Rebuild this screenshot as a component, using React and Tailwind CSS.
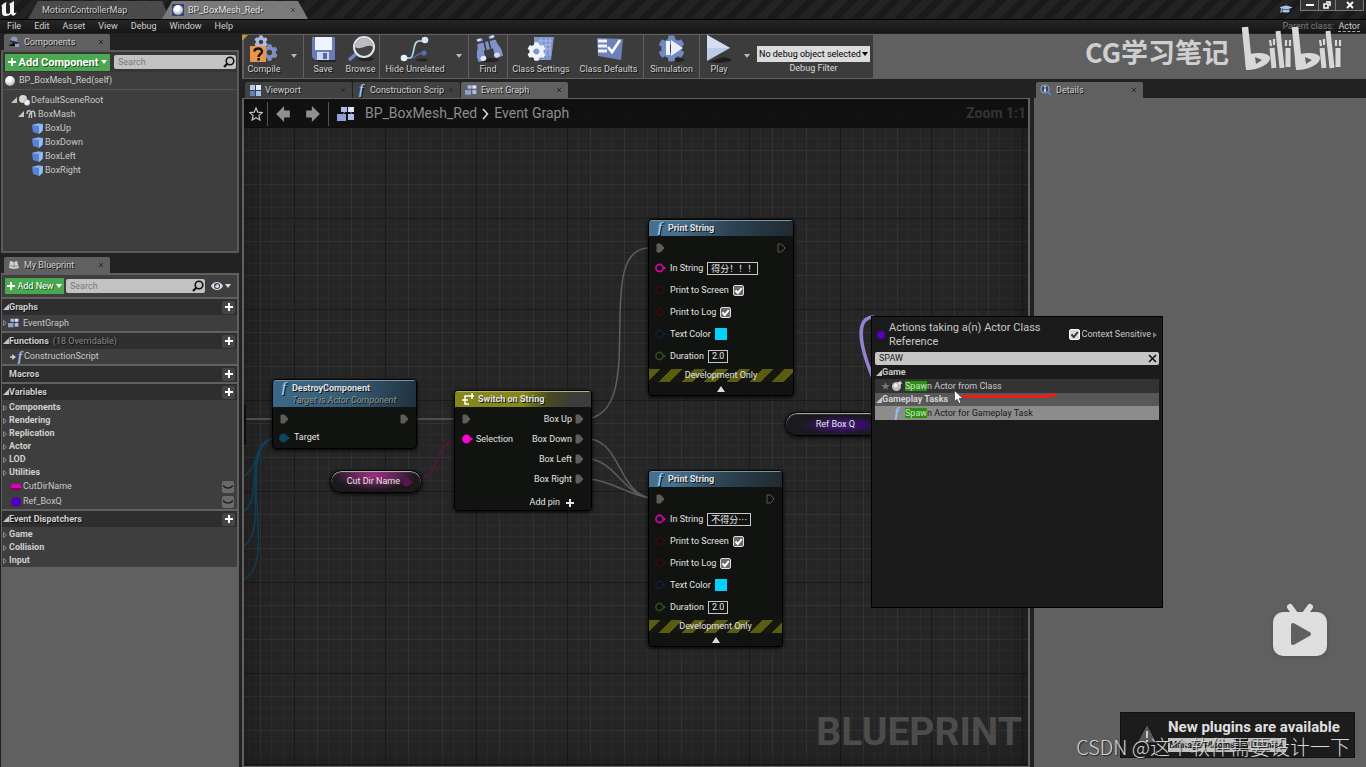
import React, { useState } from "react";
import { FaCog, FaBinoculars, FaGraduationCap, FaEye } from "react-icons/fa";

const categories = ["Components", "Rendering", "Replication", "Actor", "LOD", "Utilities"];
const dispatchers = ["Game", "Collision", "Input"];
const meshes = ["BoxUp", "BoxDown", "BoxLeft", "BoxRight"];
const menus = ["File", "Edit", "Asset", "View", "Debug", "Window", "Help"];

/* ---------- small icons ---------- */

function Caret({ className = "" }) {
  return (
    <svg viewBox="0 0 6 4" className={`h-1 w-1.5 shrink-0 ${className}`} fill="currentColor">
      <path d="M0 0h6L3 4z" />
    </svg>
  );
}

function Plus({ className = "" }) {
  return (
    <svg viewBox="0 0 8 8" className={`h-2 w-2 shrink-0 ${className}`} fill="currentColor">
      <path d="M3 0h2v3h3v2H5v3H3V5H0V3h3z" />
    </svg>
  );
}

function OpenArrow() {
  return (
    <svg viewBox="0 0 6 6" className="h-1.5 w-1.5 shrink-0" fill="#c4c4c4">
      <path d="M6 0v6H0z" />
    </svg>
  );
}

function ClosedArrow() {
  return (
    <svg viewBox="0 0 6 8" className="h-2 w-1.5 shrink-0" fill="none" stroke="#8a8a8a">
      <path d="M1.500 1.500L4.500 4l-3 2.500z" />
    </svg>
  );
}

function CloseX({ className = "" }) {
  return (
    <svg viewBox="0 0 6 6" className={`h-1.5 w-1.5 shrink-0 ${className}`} stroke="currentColor">
      <path d="M1 1l4 4M5 1L1 5" />
    </svg>
  );
}

function Magnifier() {
  return (
    <svg viewBox="0 0 12 12" className="h-3 w-3 shrink-0" fill="none" stroke="#111">
      <circle cx="7" cy="5" r="3.800" strokeWidth="1.600" />
      <path d="M4.300 7.800L1 11" strokeWidth="2.200" />
    </svg>
  );
}

function Sphere({ className = "h-2.5 w-2.5" }) {
  return (
    <span
      className={`inline-block shrink-0 rounded-full bg-[radial-gradient(circle_at_40%_30%,#fff_25%,#c9c9c9_60%,#777)] ${className}`}
    />
  );
}

function GraphIcon({ className = "h-3 w-3" }) {
  return (
    <svg viewBox="0 0 18 14" className={`shrink-0 ${className}`}>
      <g fill="#aebbe4">
        <rect x="4" y="0" width="6" height="5" />
        <rect x="11" y="0" width="6" height="5" fill="#dfe5f8" />
        <rect x="0" y="7" width="9" height="7" fill="#8ea0d6" />
        <rect x="11" y="7" width="6" height="6" />
      </g>
      <path d="M8 5l-3 3M14 5v2" stroke="#6f7fae" />
    </svg>
  );
}

function ViewportIcon() {
  return (
    <svg viewBox="0 0 11 11" className="h-[11px] w-[11px]">
      <rect width="5" height="5" fill="#b9cbe9" />
      <rect x="6" width="5" height="5" fill="#e5edfa" />
      <rect y="6" width="5" height="5" fill="#5c83bd" />
      <rect x="6" y="6" width="5" height="5" fill="#9fc0e8" />
    </svg>
  );
}

function Func({ className = "text-[#8fc6ee]" }) {
  return (
    <span
      className={`w-2 text-center font-['Liberation_Serif',serif] text-[14px] font-bold italic leading-[14px] ${className}`}
    >
      f
    </span>
  );
}

function CubeIcon() {
  return (
    <svg viewBox="0 0 11 11" className="h-[11px] w-[11px] shrink-0">
      <path d="M0 2l6-1.500L11 1l-.5 7L7 11 1 9z" fill="#5b82d2" />
      <path d="M0 2l6-1.500L11 1 7 3z" fill="#8db4ee" />
      <path d="M7 3l4-2-.5 7L7 11z" fill="#8fc0ee" />
    </svg>
  );
}

function ExecPin({ open }) {
  return (
    <svg viewBox="0 0 9 10" className="h-2.5 w-[9px] shrink-0">
      <path
        d="M1 1h3.500L8 5 4.500 9H1z"
        fill={open ? "none" : "#5d5d5b"}
        stroke="#5d5d5b"
      />
    </svg>
  );
}

function DataPin({ color, filled }) {
  return (
    <svg viewBox="0 0 11 10" className="h-2.5 w-[11px] shrink-0">
      <circle cx="4.500" cy="5" r="3.600" fill={filled ? color : "none"} stroke={color} strokeWidth="1.600" />
      <path d="M8.500 3L11 5 8.500 7z" fill={color} />
    </svg>
  );
}

function Tick({ id, light }) {
  return (
    <span className="relative inline-flex h-[11px] w-[11px] shrink-0">
      <input
        id={id}
        type="checkbox"
        defaultChecked
        className={`peer h-[11px] w-[11px] appearance-none rounded-[2px] border ${
          light ? "border-white bg-[#d8d8d8]" : "border-[#dcdcdc] bg-[#6a6a6a]"
        }`}
      />
      <svg
        viewBox="0 0 11 11"
        className="pointer-events-none absolute inset-0 hidden peer-checked:block"
        fill="none"
        stroke={light ? "#333" : "#fff"}
        strokeWidth="2"
      >
        <path d="M2.500 5.500l2.300 2.500 4-5" />
      </svg>
    </span>
  );
}

/* ---------- toolbar ---------- */

function CompileIcon() {
  return (
    <svg viewBox="0 0 30 28" className="h-7 w-[30px]">
      <FaCog x="5" y="0" size={14} color="#aebbe0" />
      <FaCog x="12" y="9" size={17} color="#7f90bf" />
      <rect x="1" y="11" width="16" height="16" fill="#e8954f" />
      <path
        d="M5.500 16.500c0-4 7.500-4 7.500 0 0 2.500-3.500 2.500-3.500 5.500"
        fill="none"
        stroke="#1c130b"
        strokeWidth="2.400"
      />
      <rect x="8.300" y="23" width="2.600" height="2.600" fill="#1c130b" />
    </svg>
  );
}

function SaveIcon() {
  return (
    <svg viewBox="0 0 30 28" className="h-7 w-[30px]">
      <path d="M6 24l20 0 3 3-18 0z" fill="#222" />
      <path d="M4 2h23v23H7l-3-3z" fill="#6a7cb8" />
      <rect x="7" y="2" width="17" height="13" fill="#f0f3fb" />
      <rect x="9" y="17" width="12" height="8" fill="#cdd6ee" />
      <rect x="15" y="18" width="4" height="6" fill="#55669e" />
    </svg>
  );
}

function BrowseIcon() {
  return (
    <svg viewBox="0 0 30 28" className="h-7 w-[30px]">
      <ellipse cx="20" cy="24" rx="8" ry="2" fill="#222" />
      <path d="M11 18l-8 7" stroke="#7285c8" strokeWidth="3.500" />
      <circle cx="18" cy="12" r="10" fill="#444" stroke="#dfe5f3" strokeWidth="2" />
      <path d="M9 12a9 9 0 0118 0c-5-4-12 4-18 0z" fill="#bdbdbd" />
    </svg>
  );
}

function HideIcon() {
  return (
    <svg viewBox="0 0 30 28" className="h-7 w-[30px]">
      <path d="M4 23h6c5 0 2-17 9-17h6" fill="none" stroke="#b5dcec" strokeWidth="1.600" />
      <path d="M12 23c4 0 4-5 11-5" fill="none" stroke="#566a9c" strokeWidth="1.600" />
      <ellipse cx="22" cy="25" rx="6" ry="1.500" fill="#222" />
      <circle cx="4" cy="23" r="3.300" fill="#e8f4fb" />
      <circle cx="25" cy="5" r="3.300" fill="#d3e7f5" />
      <circle cx="24" cy="18" r="2.600" fill="#566fb2" />
    </svg>
  );
}

function FindIcon() {
  return (
    <svg viewBox="0 0 30 28" className="h-7 w-[30px]">
      <ellipse cx="17" cy="25" rx="9" ry="2" fill="#222" />
      <g transform="rotate(-14 15 13)">
        <FaBinoculars x="2" y="0" size={26} color="#7e92cc" />
        <ellipse cx="8" cy="22" rx="3" ry="2.500" fill="#e7ebf7" />
        <ellipse cx="22" cy="22" rx="3" ry="2.500" fill="#cfd7ee" />
        <rect x="6" y="2" width="4" height="2" fill="#dfe5f6" />
        <rect x="20" y="2" width="4" height="2" fill="#dfe5f6" />
      </g>
    </svg>
  );
}

function ClassSettingsIcon() {
  return (
    <svg viewBox="0 0 30 28" className="h-7 w-[30px]">
      <path d="M8 2h20l-3 23H8z" fill="#7f95cf" />
      <path d="M12 6h14M12 10h13M12 14h13M15 3v18M20 3v18M24 3v18" stroke="#b8c6ea" strokeWidth="0.800" />
      <FaCog x="1" y="7" size={19} color="#eef2fb" />
    </svg>
  );
}

function ClassDefaultsIcon() {
  return (
    <svg viewBox="0 0 30 28" className="h-7 w-[30px]">
      <path d="M3 3l26 1-2 21-23-4z" fill="#6f81bb" />
      <path d="M4 6h9M4 11h9M4 16h9" stroke="#f2f4fb" strokeWidth="3" />
      <path d="M14 12l4 5 8-12" fill="none" stroke="#fff" strokeWidth="2.600" />
    </svg>
  );
}

function SimulationIcon() {
  return (
    <svg viewBox="0 0 30 28" className="h-7 w-[30px]">
      <ellipse cx="19" cy="25" rx="9" ry="2" fill="#222" />
      <FaCog x="1" y="0" size={27} color="#7289c4" />
      <rect x="9" y="6" width="4" height="14" fill="#eef2fb" />
      <path d="M14 5l12 8-12 8z" fill="#e8effa" />
    </svg>
  );
}

function PlayIcon() {
  return (
    <svg viewBox="0 0 30 28" className="h-7 w-[30px]">
      <path d="M4 27l16-5 7 2 0 2-12 2z" fill="#1d1d1d" />
      <path d="M3 0l23 13L3 26z" fill="#bdcae8" />
      <path d="M3 0l23 13H3z" fill="#d3ddf2" />
    </svg>
  );
}

function Tool({ label, icon, width }) {
  return (
    <button
      className={`flex h-full flex-col items-center justify-end text-[#d2d2d2] [text-shadow:1px_1px_0_#111] ${width}`}
    >
      <span className="flex h-7 items-center">{icon}</span>
      <span className="whitespace-nowrap leading-[13px]">{label}</span>
    </button>
  );
}

function ToolCaret({ width, label }) {
  return (
    <button aria-label={label} className={`flex h-full items-center justify-center text-[#b8b8b8] ${width}`}>
      <Caret />
    </button>
  );
}

function Toolbar() {
  const group = "flex h-full border-r border-[#606060] pb-0.5";
  return (
    <div className="flex h-[45px] bg-[#606060] pt-px pb-px">
      <div className="relative ml-0.5 flex items-stretch bg-[#3c3c3c]">
        <span className="absolute -left-0.5 top-0 h-1.5 w-1.5 bg-[#b39a35] [clip-path:polygon(0_0,100%_0,0_100%)]" />
        <div className={group}>
          <Tool label="Compile" icon={<CompileIcon />} width="w-[40px]" />
          <ToolCaret label="Compile options" width="w-[19px]" />
        </div>
        <div className={group}>
          <Tool label="Save" icon={<SaveIcon />} width="w-[38px]" />
          <Tool label="Browse" icon={<BrowseIcon />} width="w-[37px]" />
        </div>
        <div className={group}>
          <Tool label="Hide Unrelated" icon={<HideIcon />} width="w-[70px]" />
          <ToolCaret label="Hide options" width="w-[18px]" />
        </div>
        <div className={group}>
          <Tool label="Find" icon={<FindIcon />} width="w-[38px]" />
        </div>
        <div className={group}>
          <Tool label="Class Settings" icon={<ClassSettingsIcon />} width="w-[66px]" />
          <Tool label="Class Defaults" icon={<ClassDefaultsIcon />} width="w-[69px]" />
        </div>
        <div className={group}>
          <Tool label="Simulation" icon={<SimulationIcon />} width="w-[55px]" />
        </div>
        <div className="flex h-full pb-0.5">
          <Tool label="Play" icon={<PlayIcon />} width="w-[38px]" />
          <ToolCaret label="Play options" width="w-[18px]" />
        </div>
        <div className="flex flex-col items-center pr-[3px] pl-px pt-[11px]">
          <span className="relative flex">
            <select
              id="debug-filter"
              className="h-4 w-[113px] appearance-none bg-[#dcdcdc] pl-0.5 text-[9px] leading-4 text-black"
            >
              <option>No debug object selected</option>
            </select>
            <Caret className="pointer-events-none absolute right-0.5 top-1.5 text-black" />
          </span>
          <label htmlFor="debug-filter" className="text-[#dcdcdc]">
            Debug Filter
          </label>
        </div>
      </div>
    </div>
  );
}

/* ---------- left column ---------- */

function PanelTab({ icon, label, active, wide = "w-[107px]" }) {
  return (
    <div
      className={`flex h-4 items-center gap-1 rounded-t-[2px] pl-1 pr-1.5 text-[#d0d0d0] [text-shadow:1px_1px_0_#111] ${wide} ${
        active ? "bg-[#606060]" : "bg-[#414141]"
      }`}
    >
      <span className="flex w-3 justify-center">{icon}</span>
      <span className="flex-1 whitespace-nowrap">{label}</span>
      <CloseX className="text-[#2a2a2a]" />
    </div>
  );
}

function SearchBox({ id, value, onChange }) {
  return (
    <div className="flex h-[14px] min-w-0 flex-1 items-center rounded-[2px] bg-[#c2c2c2] pl-1 pr-px">
      <input
        id={id}
        aria-label="Search"
        placeholder="Search"
        value={value}
        onChange={(e) => onChange(e.target.value)}
        className="w-full min-w-0 bg-transparent text-black outline-none placeholder:text-[#7c7c7c]"
      />
      <Magnifier />
    </div>
  );
}

function ComponentsPanel() {
  const [query, setQuery] = useState("");

  return (
    <section className="flex h-[219px] flex-col">
      <div className="pl-1">
        <PanelTab
          active
          label="Components"
          wide="w-[106px]"
          icon={
            <svg viewBox="0 0 12 12" className="h-3 w-3">
              <circle cx="6" cy="4" r="3.500" fill="#8b98b3" />
              <path d="M1 10l4-3 6 3M2 5l8 2" stroke="#262b35" strokeWidth="1.500" />
              <rect x="7" y="8" width="4" height="3" fill="#8ea1cc" />
            </svg>
          }
        />
      </div>
      <div className="ml-px flex-1 border-2 border-[#5a5a5a] bg-[#3e3e3e]">
        <div className="flex h-5 items-center gap-1 bg-[#363636] pl-0.5 pr-px">
          <button className="flex h-[17px] w-[105px] items-center justify-center gap-[3px] bg-[#4ba750] text-[11px] font-bold text-white [text-shadow:1px_1px_0_#1d5a20]">
            <Plus /> Add Component <Caret />
          </button>
          <SearchBox id="component-search" value={query} onChange={setQuery} />
        </div>
        <div className="mx-0.5 flex h-[18px] items-center gap-1 border-b border-[#545454] text-[#d0d0d0]">
          <Sphere /> BP_BoxMesh_Red(self)
        </div>
        <ul className="pt-[3px] text-[#c8c8c8]">
          <li className="flex h-[14px] items-center gap-px pl-2">
            <OpenArrow />
            <svg viewBox="0 0 12 12" className="h-3 w-3">
              <circle cx="5" cy="5" r="4" fill="#d6d6d6" />
              <circle cx="9" cy="8.500" r="3" fill="#f2f2f2" stroke="#777" strokeWidth="0.500" />
            </svg>
            DefaultSceneRoot
          </li>
          <li className="flex h-[14px] items-center gap-0.5 pl-[15px]">
            <OpenArrow />
            <svg viewBox="0 0 10 10" className="h-2.5 w-2.5" fill="none" stroke="#c9c9c9" strokeWidth="1.400">
              <path d="M1 5c0-4 3-4 4-2 3-2 4 0 4 5M5 3c-2 2-2 3-2 6M5.500 3v6" />
            </svg>
            BoxMash
          </li>
          {meshes.map((m) => (
            <li key={m} className="flex h-[14px] items-center gap-0.5 pl-[29px]">
              <CubeIcon />
              {m}
            </li>
          ))}
        </ul>
      </div>
    </section>
  );
}

function Section({ title, note, open = true, children }) {
  return (
    <div className="border-t-2 border-[#606060] bg-[#3e3e3e]">
      <div className="flex h-4 items-center bg-[#2e2e2e] pl-px pr-0.5 font-bold text-[#cfcfcf] [text-shadow:1px_1px_0_#111]">
        {open ? <OpenArrow /> : <span className="w-1.5" />}
        {title}
        {note && <span className="ml-1 font-normal text-[#858585]">{note}</span>}
        <button
          aria-label={`Add ${title}`}
          className="ml-auto flex h-[13px] w-[13px] items-center justify-center rounded-[2px] bg-[#454545] text-white"
        >
          <Plus />
        </button>
      </div>
      {children}
    </div>
  );
}

function CategoryRows({ items }) {
  return (
    <ul className="pt-px font-bold text-[#cfcfcf]">
      {items.map((c) => (
        <li key={c} className="flex h-[13px] items-center gap-px">
          <ClosedArrow />
          {c}
        </li>
      ))}
    </ul>
  );
}

function VariableRow({ name, swatch }) {
  return (
    <div className="flex h-[15px] items-center pl-2 pr-[3px] text-[#c8c8c8]">
      <span className="mr-0.5 flex w-[11px] justify-center">
        <span className={swatch} />
      </span>
      {name}
      <button
        aria-label={`Toggle ${name} visibility`}
        className="ml-auto flex h-3 w-3 items-center justify-center rounded-[2px] bg-[#6a6a6a]"
      >
        <svg viewBox="0 0 10 6" className="h-1.5 w-2.5" fill="none" stroke="#1c1c1c" strokeWidth="1.200">
          <path d="M0 1.500c3 3.500 7 3.500 10 0" />
        </svg>
      </button>
    </div>
  );
}

function MyBlueprintPanel() {
  const [query, setQuery] = useState("");

  return (
    <section className="mt-1 flex min-h-0 flex-1 flex-col">
      <div className="pl-1">
        <PanelTab
          active
          label="My Blueprint"
          wide="w-[106px]"
          icon={
            <svg viewBox="0 0 12 12" className="h-3 w-3">
              <path d="M1 9l1-7 4 1 3-1 2 7-5 1z" fill="#cfd2d8" />
              <path d="M6 3v6M2 7h8" stroke="#777" strokeWidth="0.800" />
            </svg>
          }
        />
      </div>
      <div className="ml-px min-h-0 flex-1 bg-[#606060] pl-px pr-0.5 pt-0.5">
        <div className="flex h-[22px] items-center gap-0.5 bg-[#3e3e3e] pl-[3px] pr-1.5">
          <button className="flex h-4 w-[59px] shrink-0 items-center justify-center gap-0.5 bg-[#4ba750] text-white [text-shadow:1px_1px_0_#1d5a20]">
            <Plus /> Add New <Caret />
          </button>
          <SearchBox id="blueprint-search" value={query} onChange={setQuery} />
          <button aria-label="View options" className="flex items-center gap-0.5 pl-1 text-[#d6d9e4]">
            <FaEye size={12} />
            <Caret />
          </button>
        </div>
        <Section title="Graphs">
          <div className="flex h-4 items-center text-[#c8c8c8]">
            <ClosedArrow />
            <GraphIcon className="mr-1 h-[10px] w-[11px]" />
            EventGraph
          </div>
        </Section>
        <Section title="Functions" note="(18 Overridable)">
          <div className="flex h-[15px] items-center pl-2 text-[#c8c8c8]">
            <svg viewBox="0 0 8 8" className="h-1.5 w-1.5" fill="#c6cde6">
              <path d="M0 3h3V0l5 4-5 4V5H0z" />
            </svg>
            <Func className="text-[#9fb0df]" />
            ConstructionScript
          </div>
        </Section>
        <Section title="Macros" open={false} />
        <Section title="Variables">
          <CategoryRows items={categories} />
          <VariableRow name="CutDirName" swatch="h-1.5 w-2.5 rounded-[2px] bg-[#e000b4] border-b-2 border-[#7a0060]" />
          <VariableRow name="Ref_BoxQ" swatch="h-2.5 w-2.5 rounded-full bg-[#5100b8]" />
        </Section>
        <Section title="Event Dispatchers">
          <CategoryRows items={dispatchers} />
        </Section>
      </div>
    </section>
  );
}

/* ---------- graph ---------- */

function GridBackground() {
  const minor = [11, 23, 34, 45, 57, 68, 80];
  return (
    <svg className="absolute inset-0 h-full w-full" shapeRendering="crispEdges">
      <defs>
        <pattern id="grid" x="50" y="28" width="91" height="91" patternUnits="userSpaceOnUse">
          {minor.map((n) => (
            <g key={n} fill={n === 23 || n === 57 ? "#333333" : "#2d2d2d"}>
              <rect x={n} y="0" width="1" height="91" />
              <rect x="0" y={n} width="91" height="1" />
            </g>
          ))}
          <rect width="1" height="91" fill="#1a1a1a" />
          <rect width="91" height="1" fill="#1a1a1a" />
        </pattern>
      </defs>
      <rect width="100%" height="100%" fill="url(#grid)" />
    </svg>
  );
}

function Wires() {
  return (
    <svg className="absolute inset-0 h-full w-full" fill="none">
      <g transform="translate(-244 -99)">
        <g stroke="#5c5c5c" strokeWidth="1.600">
          <path d="M244 419h30M416 419h40" />
          <path d="M583 419c69 0 7-171 66-171" />
          <path d="M590 439c30 3 30 55 60 59" />
          <path d="M590 459c25 3 35 36 60 39" />
          <path d="M590 479c22 2 38 16 60 19" />
        </g>
        <path d="M421 479c18-4 14-35 34-39" stroke="#571547" strokeWidth="1.600" />
        <g stroke="#0f3f58" strokeWidth="1.400">
          <path d="M274 438c-20 2-14 29-30 38" />
          <path d="M274 438c-32 6-10 62-30 73" />
          <path d="M274 438c-36 8-4 92-30 108" />
          <path d="M274 438c-40 10 5 126-30 141" />
        </g>
        <path d="M874 317c-19 0-15 27-1 61" stroke="#9583d0" strokeWidth="3.500" />
      </g>
    </svg>
  );
}

function Node({ place, head, title, subtitle, icon, children }) {
  return (
    <div
      className={`absolute flex flex-col overflow-hidden rounded-[4px] border border-black bg-[#10120f]/95 text-[#e4e4e4] shadow-[0_1px_4px_#000] ${place}`}
    >
      <div className={`flex gap-1 pl-[7px] font-bold [text-shadow:1px_1px_0_#111] ${head}`}>
        {icon}
        <div>
          <div className="leading-[14px]">{title}</div>
          {subtitle && (
            <div className="leading-[10px] font-normal italic text-[#8b9b8d]">{subtitle}</div>
          )}
        </div>
      </div>
      {children}
    </div>
  );
}

function PrintNode({ id, place, text, box }) {
  const row = "flex h-[22px] items-center gap-1 pl-1.5";
  return (
    <Node
      place={place}
      title="Print String"
      icon={<Func />}
      head="h-4 border-t border-[#7895a8] bg-[linear-gradient(100deg,#45718f_20%,#2d4454_55%,#20292f)]"
    >
      <div className="flex h-[21px] items-center justify-between px-[7px] pt-0.5">
        <ExecPin />
        <ExecPin open />
      </div>
      <div className={row}>
        <DataPin color="#e000b4" />
        <label htmlFor={`${id}-text`}>In String</label>
        <input
          id={`${id}-text`}
          defaultValue={text}
          className={`h-[13px] border border-[#c8c8c8] bg-transparent px-[3px] font-['Noto_Sans_CJK_SC',sans-serif] ${box}`}
        />
      </div>
      <div className={row}>
        <DataPin color="#360d10" />
        <label htmlFor={`${id}-screen`}>Print to Screen</label>
        <Tick id={`${id}-screen`} />
      </div>
      <div className={row}>
        <DataPin color="#360d10" />
        <label htmlFor={`${id}-log`}>Print to Log</label>
        <Tick id={`${id}-log`} />
      </div>
      <div className={row}>
        <DataPin color="#10203f" />
        <span>Text Color</span>
        <button aria-label="Text Color" className="h-3 w-3 bg-[#00d2ff]" />
      </div>
      <div className={row}>
        <DataPin color="#2f4c1e" />
        <label htmlFor={`${id}-duration`}>Duration</label>
        <input
          id={`${id}-duration`}
          defaultValue="2.0"
          className="h-[13px] w-5 border border-[#c8c8c8] bg-transparent px-[3px]"
        />
      </div>
      <div className="mt-0.5 h-[13px] bg-[repeating-linear-gradient(135deg,#5c5c10_0_8px,#14160f_8px_16px)] text-center leading-[13px]">
        Development Only
      </div>
      <button aria-label="Collapse" className="flex flex-1 items-center justify-center">
        <svg viewBox="0 0 8 6" className="h-1.5 w-2" fill="#dcdcdc">
          <path d="M4 0l4 6H0z" />
        </svg>
      </button>
    </Node>
  );
}

function GraphCanvas() {
  const outs = ["Box Up", "Box Down", "Box Left", "Box Right"];
  return (
    <>
      <Wires />
      <div className="absolute left-0 top-[306px] h-10 w-0.5 bg-[#0c0c0c]" />

      <Node
        place="left-[28px] top-[280px] h-[70px] w-[145px]"
        title="DestroyComponent"
        subtitle="Target is Actor Component"
        icon={<Func />}
        head="h-[27px] border-t border-[#7895a8] bg-[linear-gradient(100deg,#3c6685_10%,#375b75_55%,#1f303c)]"
      >
        <div className="flex h-[22px] items-center justify-between px-[7px] pt-px">
          <ExecPin />
          <ExecPin />
        </div>
        <div className="flex h-4 items-center gap-1 pl-1.5 pt-px">
          <DataPin color="#0d4560" filled />
          Target
        </div>
      </Node>

      <div className="absolute left-[86px] top-[371px] flex h-[23px] w-[92px] items-center justify-end gap-0.5 rounded-full border border-black bg-[radial-gradient(ellipse_at_48%_20%,#a02c88_0,#5c2450_35%,#1b191b_62%)] pr-2 text-[#e4e4e4] shadow-[inset_0_1px_1px_#b8b8b8,0_1px_4px_#000]">
        Cut Dir Name
        <DataPin color="#5b1450" filled />
      </div>

      <Node
        place="left-[210px] top-[291px] h-[121px] w-[138px]"
        title="Switch on String"
        icon={
          <svg viewBox="0 0 12 12" className="mt-px h-3 w-3" fill="none" stroke="#fff" strokeWidth="1.500">
            <path d="M0 7h6M8 3H3v8h4M10 0v6M7 3h5" />
          </svg>
        }
        head="h-4 border-t border-[#b5b560] bg-[linear-gradient(100deg,#85871a_50%,#4a4a20_68%,#3b3b3b_85%)]"
      >
        <div className="flex justify-between pl-[7px] pr-[7px] pt-0.5">
          <div>
            <div className="flex h-5 items-center">
              <ExecPin />
            </div>
            <div className="flex h-5 items-center gap-[3px]">
              <DataPin color="#ff00d0" filled />
              Selection
            </div>
          </div>
          <div>
            {outs.map((o) => (
              <div key={o} className="flex h-5 items-center justify-end gap-[3px]">
                {o}
                <ExecPin />
              </div>
            ))}
          </div>
        </div>
        <button className="ml-auto mr-[17px] mt-[7px] flex items-center gap-1.5">
          Add pin <Plus />
        </button>
      </Node>

      <PrintNode id="hit" place="left-[404px] top-[120px] h-[177px] w-[146px]" text="得分！！！" box="w-[51px]" />
      <PrintNode id="miss" place="left-[404px] top-[371px] h-[177px] w-[135px]" text="不得分…" box="w-[44px]" />

      <div className="absolute left-[541px] top-[313px] flex h-6 w-[96px] items-center justify-end gap-0.5 rounded-full border border-black bg-[radial-gradient(ellipse_at_58%_55%,#4b1a86_0,#2f1550_30%,#1b191d_55%)] pr-3 text-[#e4e4e4] shadow-[inset_0_1px_1px_#b8b8b8,0_1px_4px_#000]">
        Ref Box Q
        <DataPin color="#3a0a70" filled />
      </div>
    </>
  );
}

function GraphPanel() {
  return (
    <div className="relative flex-1 overflow-hidden border-2 border-t border-b border-[#606060] bg-[#262626]">
      <GridBackground />
      <div className="absolute inset-0 shadow-[inset_0_0_40px_rgba(0,0,0,0.35)]" />
      <span className="absolute bottom-2 right-1.5 text-[39px] font-bold leading-[52px] text-[#4c4c4c]">
        BLUEPRINT
      </span>
      <GraphCanvas />
      <div className="relative flex h-[29px] items-center bg-[#0c0c0c]/80 text-[14px] text-[#8d8d8d]">
        <button aria-label="Favorite" className="flex h-6 w-6 items-center justify-center border-r border-[#555]">
          <svg viewBox="0 0 14 14" className="h-3.5 w-3.5" fill="none" stroke="#c4c4c4" strokeWidth="1.200">
            <path d="M7 1l1.800 4.200 4.400.4-3.300 3 1 4.400L7 10.700 3.100 13l1-4.400-3.300-3 4.400-.4z" />
          </svg>
        </button>
        <button aria-label="Back" className="flex w-[30px] justify-center">
          <svg viewBox="0 0 12 14" className="h-4 w-3.5" fill="#8f8f8f">
            <path d="M0 7l7-7v4h5v6H7v4z" />
          </svg>
        </button>
        <button aria-label="Forward" className="flex w-[30px] justify-center">
          <svg viewBox="0 0 12 14" className="h-4 w-3.5" fill="#8f8f8f">
            <path d="M12 7L5 0v4H0v6h5v4z" />
          </svg>
        </button>
        <span className="mr-2 h-6 border-r border-[#555]" />
        <GraphIcon className="h-3.5 w-[18px]" />
        <span className="ml-2.5">BP_BoxMesh_Red</span>
        <svg viewBox="0 0 7 12" className="mx-[5px] h-3 w-[7px]" fill="none" stroke="#d8d8d8" strokeWidth="1.600">
          <path d="M1 1l4.500 5L1 11" />
        </svg>
        <span>Event Graph</span>
        <span className="ml-auto mr-0.5 font-bold text-[#343434]">Zoom 1:1</span>
      </div>
    </div>
  );
}

/* ---------- overlays ---------- */

function Match({ rest, className }) {
  return (
    <span className={className}>
      <mark className="bg-[#2c8f12] text-[#c6e8bd]">Spaw</mark>
      {rest}
    </span>
  );
}

function ActionMenu() {
  const [search, setSearch] = useState("SPAW");

  return (
    <div className="absolute left-[871px] top-[316px] h-[292px] w-[292px] border border-black bg-[#1b1b1b] px-[3px] text-[#c8c8c8]">
      <div className="flex h-[35px] items-center pl-0.5 pr-0.5">
        <span className="mr-1 h-2 w-2 rounded-full bg-[#5a00b8]" />
        <h2 className="flex-1 text-[11px] leading-[14px]">
          Actions taking a(n) Actor Class
          <br />
          Reference
        </h2>
        <Tick id="context-sensitive" light />
        <label htmlFor="context-sensitive" className="ml-0.5">
          Context Sensitive
        </label>
        <svg viewBox="0 0 4 6" className="ml-0.5 h-1.5 w-1" fill="#777">
          <path d="M0 0l4 3-4 3z" />
        </svg>
      </div>
      <div className="flex h-[13px] items-center rounded-[2px] bg-[#c6c6c6] pl-1 pr-0.5">
        <input
          aria-label="Search actions"
          value={search}
          onChange={(e) => setSearch(e.target.value)}
          className="min-w-0 flex-1 bg-transparent text-[#1a1a1a] outline-none"
        />
        <button aria-label="Clear search" onClick={() => setSearch("")}>
          <svg viewBox="0 0 9 9" className="h-[9px] w-[9px]" stroke="#111" strokeWidth="1.600">
            <path d="M1 1l7 7M8 1L1 8" />
          </svg>
        </button>
      </div>
      <div className="flex h-[14px] items-center pl-px pt-px font-bold">
        <OpenArrow />
        Game
      </div>
      <div className="flex h-[14px] items-center bg-[#333] pl-1.5">
        <span className="w-[10px] text-[#777]">★</span>
        <svg viewBox="0 0 12 12" className="mr-0.5 h-3 w-3">
          <circle cx="5.500" cy="6.500" r="4.500" fill="#bdbdbd" />
          <circle cx="4.500" cy="5.500" r="2" fill="#eee" />
          <path d="M7 3l4 0M9 1v4" stroke="#fff" />
        </svg>
        <Match rest="n Actor from Class" />
      </div>
      <div className="flex h-[13px] items-center bg-[#585858] pl-px font-bold text-[#d2d2d2]">
        <OpenArrow />
        Gameplay Tasks
      </div>
      <div className="flex h-[14px] items-center gap-1 bg-[#8c8c8c] pl-[18px]">
        <Func />
        <Match className="text-[#1a1a1a]" rest="n Actor for Gameplay Task" />
      </div>
    </div>
  );
}

function Pointer() {
  return (
    <svg viewBox="0 0 104 16" className="pointer-events-none absolute left-[953px] top-[389px] h-4 w-[104px]">
      <path d="M10 7.500h80l8-1 4-1" stroke="#f31b10" strokeWidth="2.800" strokeLinecap="round" fill="none" />
      <path d="M1.500 1.500v11l2.600-2.300 1.900 4.300 2-1-1.900-4H10z" fill="#fff" stroke="#222" strokeWidth="0.600" />
    </svg>
  );
}

function Notification() {
  return (
    <div className="absolute bottom-[9px] right-[11px] flex h-[46px] w-[235px] items-start border border-[#111] bg-[#1c1c1c] pt-1.5 pl-[15px]">
      <svg viewBox="0 0 22 22" className="mt-1 mr-2.5 h-[22px] w-[22px] shrink-0">
        <path d="M11 1l10 19H1z" fill="#585858" stroke="#111" />
        <path d="M11 8v7M11 17v2" stroke="#eee" strokeWidth="1.500" />
      </svg>
      <div>
        <h3 className="whitespace-nowrap text-[15px] font-bold leading-4 text-[#e0e0e0]">
          New plugins are available
        </h3>
        <div className="flex gap-3 pt-[3px] text-[#1a1a1a]">
          <button className="h-[14px] w-[68px] bg-[#c0c0c0] font-bold leading-[14px]">Manage Plugins</button>
          <button className="h-[14px] w-[38px] bg-[#c0c0c0] font-bold leading-[14px]">Dismiss</button>
        </div>
      </div>
    </div>
  );
}

function BiliMark() {
  const half = (
    <>
      <path d="M4 4l4 40" strokeWidth="6.500" />
      <path
        d="M5 47L4 33c10-5 25-3 25 2 0 6-11 12-24 12zM14 34l1 7 6-4z"
        fill="#d8d8d8"
        fillRule="evenodd"
        stroke="none"
      />
      <path d="M31 25l2 20M37 8l4 37M47 25v19" strokeWidth="5" />
      <path d="M29 17l1 6M33 16v6M45 17v6M49 17v6" strokeWidth="2.200" />
    </>
  );
  return (
    <svg viewBox="0 0 102 50" role="img" aria-label="bilibili" className="h-[50px] w-[102px]" fill="none" stroke="#d8d8d8">
      <g>{half}</g>
      <g transform="translate(50 0)">{half}</g>
    </svg>
  );
}

function Watermarks() {
  return (
    <div className="pointer-events-none absolute inset-0 font-['Noto_Sans_CJK_SC',sans-serif]">
      <div className="absolute right-[23px] top-[23px] flex items-center gap-3 text-[27px] font-bold leading-[40px] text-[#cfcfcf]">
        <span className="pt-2">CG学习笔记</span>
        <BiliMark />
      </div>
      <svg viewBox="0 0 56 54" className="absolute bottom-[111px] right-[38px] h-[54px] w-14 drop-shadow">
        <path d="M18 5l5 7M38 5l-5 7" stroke="#dedede" strokeWidth="6" strokeLinecap="round" />
        <rect x="1" y="10" width="54" height="44" rx="10" fill="#dedede" />
        <path d="M21 23l16 9-16 9z" fill="#606060" stroke="#606060" strokeWidth="4" strokeLinejoin="round" />
      </svg>
      <span className="absolute bottom-1 right-4 whitespace-nowrap text-[20px] font-light leading-[32px] text-[#d4d4d4] [text-shadow:1px_1px_1px_#222]">
        CSDN @这个软件需要设计一下
      </span>
    </div>
  );
}

/* ---------- window chrome ---------- */

function TitleBar() {
  return (
    <header className="flex h-5 items-end border-b border-black bg-[repeating-linear-gradient(135deg,#1a1a1a_0_7px,#232323_7px_15px)]">
      <svg viewBox="0 0 18 18" className="h-[18px] w-[18px] self-start" fill="#f2f2f2">
        <path d="M1 7c1-3 3-4 6-5-1 1-1 2-1 3v7c0 1 1 2 2 2l2-1V5L9 4l5-3v11c0 1 1 2 3 0-1 2-2 3-4 4l-2-2c-1 1-3 2-5 2-3 0-4-1-4-4V7c0-1 0-1-1 0z" />
      </svg>
      <div className="ml-2.5 flex h-[18px] w-[142px] items-center bg-[#4a4a4a] pl-3.5 text-[#cfcfcf] [clip-path:polygon(0_100%,10px_0,134px_0,142px_100%)] [text-shadow:1px_1px_0_#111]">
        MotionControllerMap
      </div>
      <div className="-ml-2 flex h-[18px] w-[146px] items-center bg-[#7a7a7a] pl-2.5 pr-3 text-[#e0e0e0] [clip-path:polygon(0_100%,10px_0,136px_0,146px_100%)] [text-shadow:1px_1px_0_#333]">
        <span className="mr-1 flex h-3 w-3 items-center justify-center bg-[#2e4478]">
          <Sphere />
        </span>
        <span className="flex-1">BP_BoxMesh_Red•</span>
        <CloseX className="text-[#444]" />
      </div>
      <FaGraduationCap size={12} color="#a4c4e8" className="mb-1 ml-auto mr-2" />
      <div className="flex h-[11px] self-start text-white">
        <button aria-label="Minimize" className="flex w-[19px] items-center justify-center border border-t-0 border-[#777] bg-[#333]">
          <span className="h-0.5 w-2 bg-white" />
        </button>
        <button aria-label="Restore" className="flex w-4 items-center justify-center border-b border-[#777] bg-[#333]">
          <svg viewBox="0 0 8 8" className="h-2 w-2" fill="none" stroke="#fff" strokeWidth="1.600">
            <path d="M1 3h4v4H1zM3 1h4v4" />
          </svg>
        </button>
        <button aria-label="Close" className="mr-0.5 flex w-[29px] items-center justify-center border border-t-0 border-[#777] bg-[#333]">
          <svg viewBox="0 0 8 8" className="h-2 w-2" stroke="#fff" strokeWidth="1.800">
            <path d="M1 1l6 6M7 1L1 7" />
          </svg>
        </button>
      </div>
    </header>
  );
}

export default function App() {
  return (
    <div className="relative flex h-screen min-h-[640px] flex-col overflow-hidden bg-[#222] font-['Roboto','Noto_Sans_CJK_SC',sans-serif] text-[9px] leading-[13px]">
      <TitleBar />
      <nav className="flex h-[13px] items-center gap-[13px] bg-[linear-gradient(#252525,#161616)] pl-[7px] pr-1.5 text-[#cfcfcf]">
        {menus.map((m) => (
          <button key={m}>{m}</button>
        ))}
        <span className="ml-auto text-[#7c7c7c]">
          Parent class:{" "}
          <a href="#actor" className="ml-0.5 border-b border-dashed border-[#aaa] text-[#cfcfcf]">
            Actor
          </a>
        </span>
      </nav>

      <div className="flex min-h-0 flex-1 pt-px">
        <aside className="flex w-[239px] shrink-0 flex-col">
          <ComponentsPanel />
          <MyBlueprintPanel />
        </aside>

        <main className="ml-[3px] flex min-w-0 flex-1 flex-col">
          <Toolbar />
          <div className="flex min-h-0 flex-1 gap-1">
            <div className="flex min-w-0 flex-1 flex-col">
              <div className="flex h-[19px] items-end gap-px pl-[3px]">
                <PanelTab label="Viewport" icon={<ViewportIcon />} />
                <PanelTab label="Construction Scrip" icon={<Func />} />
                <PanelTab active label="Event Graph" icon={<GraphIcon className="h-2.5 w-3" />} />
              </div>
              <GraphPanel />
            </div>
            <div className="flex w-[332px] shrink-0 flex-col">
              <div className="flex h-[19px] items-end pl-0.5">
                <PanelTab
                  active
                  label="Details"
                  icon={
                    <svg viewBox="0 0 12 12" className="h-3 w-3">
                      <circle cx="5" cy="5" r="4" fill="#3b4560" stroke="#8fa3d4" strokeWidth="1.200" />
                      <path d="M8 8l3 3" stroke="#5f7fd0" strokeWidth="2" />
                      <path d="M5 2v1.500M5 4.500V8" stroke="#fff" strokeWidth="1.500" />
                    </svg>
                  }
                />
              </div>
              <div className="flex-1 bg-[#606060]" />
            </div>
          </div>
        </main>
      </div>

      <ActionMenu />
      <Pointer />
      <Notification />
      <Watermarks />
    </div>
  );
}
